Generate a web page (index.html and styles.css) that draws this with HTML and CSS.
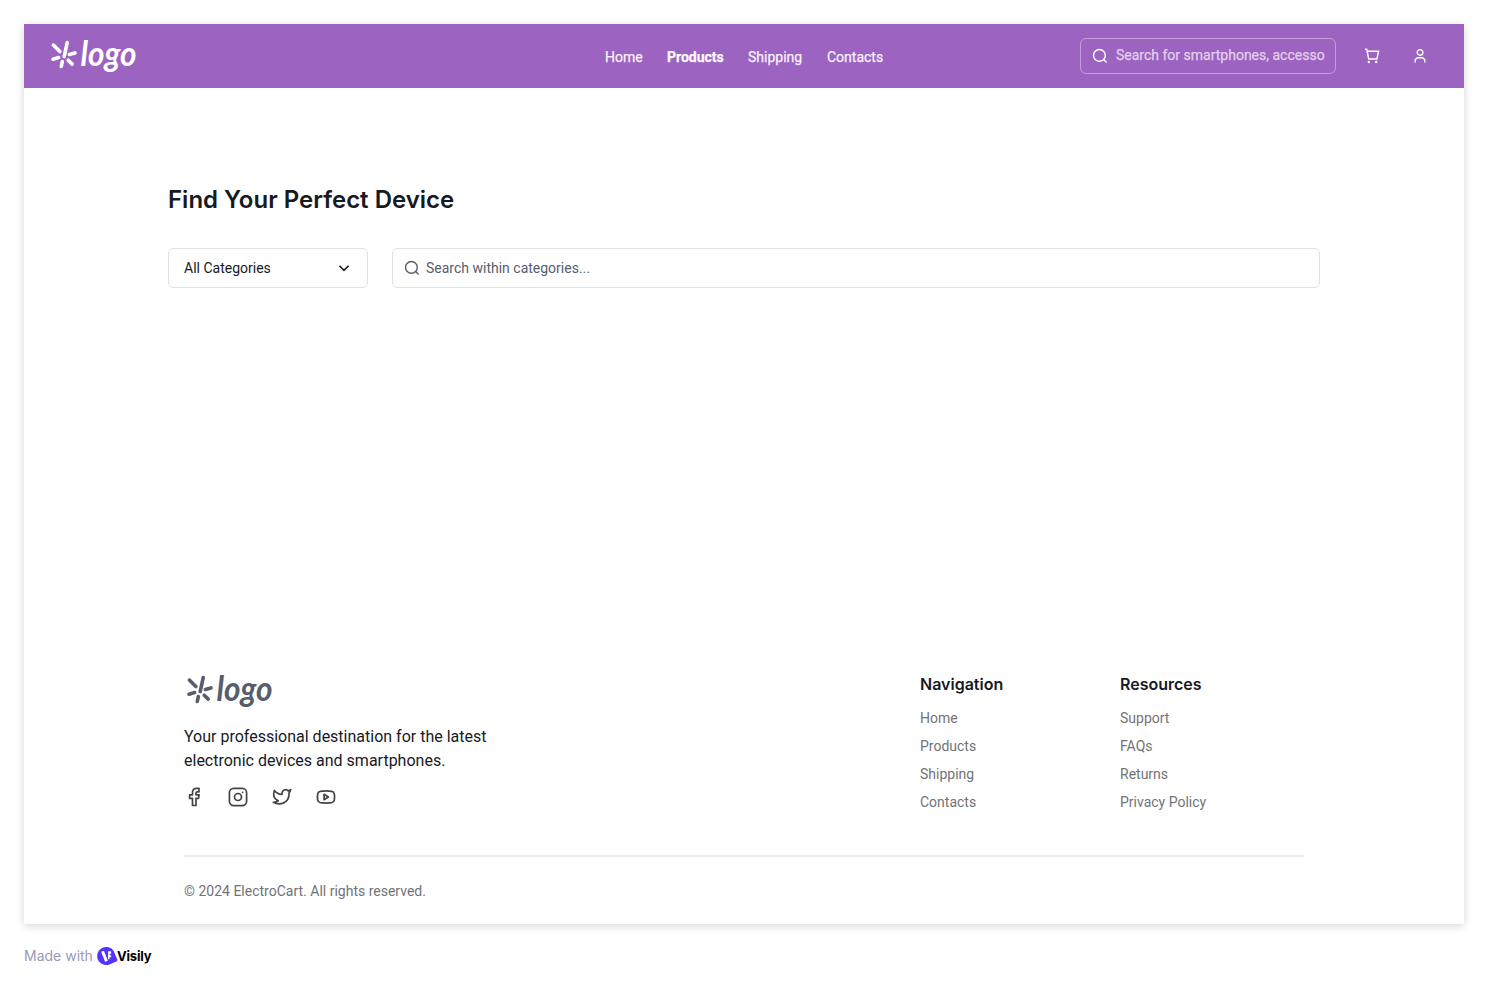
FILE: index.html
```html
<!DOCTYPE html>
<html lang="en">
<head>
<meta charset="utf-8">
<title>ElectroCart</title>
<link rel="stylesheet" href="styles.css">
</head>
<body>
<svg width="0" height="0" class="defs">
  <symbol id="logo" viewBox="0 0 92 44">
    <path d="M5.400 9.100l6.500 6.500M19.200 6.600l-3 14M21.400 18.500l5.600-1.600M20.200 24.200l4 3.900M14.300 25.600l-1 4.900M5 23.200l5.600-1.600" fill="none" stroke="currentColor" stroke-width="3.600" stroke-linecap="round"/>
    <text x="32.500" y="30" class="logo-word" textLength="56" lengthAdjust="spacingAndGlyphs">logo</text>
  </symbol>
  <symbol id="search" viewBox="0 0 16 16">
    <circle cx="7.400" cy="7.400" r="5.900"/><path d="M11.600 11.600l3 3"/>
  </symbol>
</svg>
<main class="card">
  <header class="topbar">
    <svg class="logo" width="92" height="44"><use href="#logo"/></svg>
    <nav class="nav">
      <a class="n-home">Home</a><a class="n-products active">Products</a><a class="n-shipping">Shipping</a><a class="n-contacts">Contacts</a>
    </nav>
    <div class="actions">
      <div class="top-search">
        <svg class="icon" width="16" height="16"><use href="#search"/></svg>
        <span>Search for smartphones, accesso</span>
      </div>
      <svg class="icon cart" width="16" height="16" viewBox="0 0 16 16"><path d="M1 1.200h1.700l2 9.800h8.200l1.700-7.800H3.100"/><circle class="dot" cx="4.800" cy="14" r="1.200"/><circle class="dot" cx="12.200" cy="14" r="1.200"/></svg>
      <svg class="icon" width="16" height="16" viewBox="0 0 16 16"><circle cx="8" cy="4.400" r="2.800"/><path d="M3.100 14.600v-1.400a3.400 3.400 0 0 1 3.400-3.400h3a3.400 3.400 0 0 1 3.400 3.400v1.400"/></svg>
    </div>
  </header>
  <section class="finder">
    <h1>Find Your Perfect Device</h1>
    <div class="filters">
      <div class="select"><span>All Categories</span>
        <svg class="icon chevron" width="16" height="16" viewBox="0 0 16 16"><path d="M3.400 5.800l4.600 4.600L12.600 5.800"/></svg>
      </div>
      <div class="search"><svg class="icon" width="16" height="16"><use href="#search"/></svg><span>Search within categories...</span></div>
    </div>
  </section>
  <footer class="footer">
    <div class="columns">
      <div class="about">
        <svg class="logo" width="92" height="44"><use href="#logo"/></svg>
        <p>Your professional destination for the latest<br>electronic devices and smartphones.</p>
        <div class="social">
          <svg width="20" height="20" viewBox="0 0 20 20"><path d="M15 1.300h-2.500a4 4 0 0 0-4 4v2.500H5.600v3.500h2.900v7.200H12v-7.200h2.500l.6-3.500H12V5.900c0-.7.4-1.100 1.100-1.100H15z"/></svg>
          <svg width="20" height="20" viewBox="0 0 20 20"><rect x="1.400" y="1.400" width="17.200" height="17.200" rx="4.300"/><circle cx="10" cy="10" r="3.500"/><circle class="dot" cx="14.600" cy="5.300" r=".9"/></svg>
          <svg width="20" height="20" viewBox="0 0 20 20"><path d="M18.700 2.700c-.8.6-1.500.9-2.500 1.200-2.300-2.500-6.300-.9-6.200 2.600v.8C6.900 7.400 4.200 6 2.400 3.500c0 0-3.200 7.100 3.900 10.300-1.500 1.100-3.300 1.600-5 1.500 7 3.900 15.800.2 15.800-8.600 0-.3 0-.5-.1-.8.9-.9 1.500-2 1.700-3.200z"/></svg>
          <svg width="20" height="20" viewBox="0 0 20 20"><path d="M4.300 4.300q5.700-1 11.400 0a3.200 3.200 0 0 1 2.600 2.500q.6 3.200 0 6.400a3.200 3.200 0 0 1-2.600 2.500q-5.700.8-11.400 0a3.200 3.200 0 0 1-2.600-2.500q-.6-3.200 0-6.400a3.200 3.200 0 0 1 2.600-2.500z"/><path d="M8.100 7.300v5.400l4.300-2.700z"/></svg>
        </div>
      </div>
      <div class="links"><h2>Navigation</h2><a>Home</a><a>Products</a><a>Shipping</a><a>Contacts</a></div>
      <div class="links last"><h2>Resources</h2><a>Support</a><a>FAQs</a><a>Returns</a><a>Privacy Policy</a></div>
    </div>
    <div class="copyright">© 2024 ElectroCart. All rights reserved.</div>
  </footer>
</main>
<div class="credit">
  <span class="made">Made with</span>
  <svg width="21" height="20" viewBox="0 0 21 20"><path fill="#5533ff" d="M9 1c4.700 0 7.800 2.600 8.600 6.300l2.600 6c.5 1.100.1 1.800-.9 2.300l-6.900 2.800A9 9 0 1 1 9 1z"/><path fill="none" stroke="#fff" stroke-width="3" d="M5.500 5.200l4 10"/><path fill="#fff" d="M11.100 5.200h3v2.600h-1.500v1.500h1.500v1.900h-1.600v2h-1.400z"/></svg>
  <b>Visily</b>
</div>
</body>
</html>
```
FILE: styles.css
```css
* { box-sizing: border-box; }
body { margin: 0; padding: 24px; background: #fff; font: 14px/22px Roboto, sans-serif; color: #171a1f; }
h1, h2, p { margin: 0; }
svg { display: block; flex: none; }
.defs { position: absolute; }
.card { display: flex; flex-direction: column; width: 1440px; height: 900px; background: #fff; box-shadow: 0 2px 8px rgba(0, 0, 0, .16); }
.topbar { height: 64px; padding: 0 36px 0 24px; display: grid; grid-template-columns: 557px 1fr auto; align-items: center; background: #9c63c1; color: #fff; }
.logo { overflow: visible; }
.topbar .logo { margin-top: 4px; }
.logo-word { font: italic 700 34px Lato, sans-serif; fill: currentColor; }
.nav { display: flex; padding-top: 2px; color: #f7f1fa; -webkit-text-stroke: .25px #f7f1fa; }
.nav .active { color: #fff; font-weight: 700; }
.n-home { width: 62px; }
.n-products { width: 81px; }
.n-shipping { width: 79px; }
.icon { fill: none; stroke: currentColor; stroke-width: 1.4; }
.dot { fill: currentColor; stroke: none; }
.actions { display: flex; align-items: center; gap: 32px; }
.top-search { width: 256px; height: 36px; margin-right: -4px; padding: 0 11px; display: flex; align-items: center; gap: 8px; border: 1px solid #c39fda; border-radius: 6px; }
.top-search span { white-space: nowrap; padding-bottom: 2px; color: #e3d0ed; -webkit-text-stroke: .25px #e3d0ed; }
.finder { padding: 94px 144px 0; }
.finder h1 { font: 600 24px/36px Inter, sans-serif; }
.filters { display: flex; gap: 24px; margin-top: 30px; }
.select, .search { height: 40px; border: 1px solid #dee1e6; border-radius: 6px; display: flex; align-items: center; }
.select { width: 200px; padding: 0 15px; justify-content: space-between; }
.search { flex: 1; padding: 0 11px; gap: 6px; color: #565d6d; }
.chevron { stroke-width: 1.6; }
.footer { margin: auto 160px 0; }
.columns { display: flex; height: 184px; border-bottom: 2px solid #ebecf0; }
.about { flex: none; width: 736px; color: #171a1f; }
.about .logo { margin-top: -2px; color: #565d6d; }
.about p { margin-top: 10px; font-size: 16px; line-height: 24px; }
.social { display: flex; gap: 24px; margin-top: 14px; }
.social svg { fill: none; stroke: #424347; stroke-width: 1.7; stroke-linejoin: round; color: #424347; }
.links { flex: none; width: 200px; display: flex; flex-direction: column; gap: 6px; color: #727377; }
.links.last { width: 184px; }
.links h2 { margin: -1px 0 4px; font: 600 16px/25px Inter, sans-serif; color: #171a1f; }
.copyright { height: 67px; padding-top: 23px; color: #727377; }
.credit { display: flex; align-items: center; height: 20px; margin-top: 22px; font-family: Inter, sans-serif; }
.made { width: 73px; font-size: 14px; color: #9c99b5; white-space: nowrap; }
.credit b { margin-left: -1px; color: #000; font-size: 13px; letter-spacing: -.2px; }
```
